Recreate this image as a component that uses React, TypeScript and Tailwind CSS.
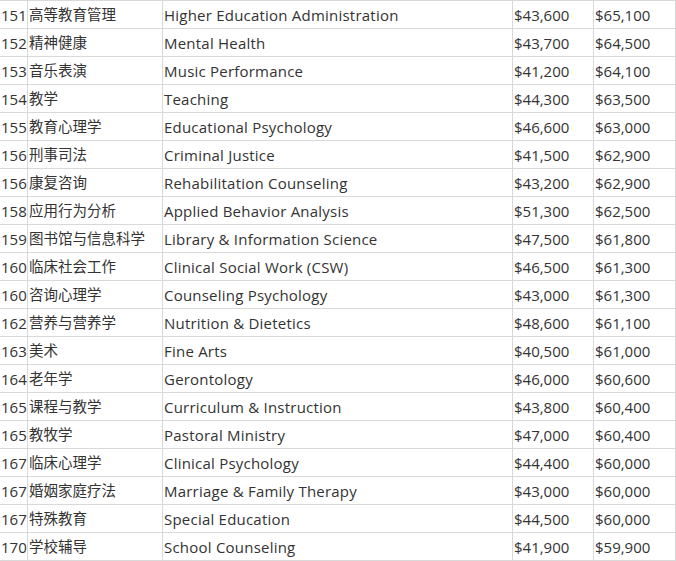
import React from "react";

const rows: [string, string, string, string, string][] = [
  ["151", "高等教育管理", "Higher Education Administration", "$43,600", "$65,100"],
  ["152", "精神健康", "Mental Health", "$43,700", "$64,500"],
  ["153", "音乐表演", "Music Performance", "$41,200", "$64,100"],
  ["154", "教学", "Teaching", "$44,300", "$63,500"],
  ["155", "教育心理学", "Educational Psychology", "$46,600", "$63,000"],
  ["156", "刑事司法", "Criminal Justice", "$41,500", "$62,900"],
  ["156", "康复咨询", "Rehabilitation Counseling", "$43,200", "$62,900"],
  ["158", "应用行为分析", "Applied Behavior Analysis", "$51,300", "$62,500"],
  ["159", "图书馆与信息科学", "Library & Information Science", "$47,500", "$61,800"],
  ["160", "临床社会工作", "Clinical Social Work (CSW)", "$46,500", "$61,300"],
  ["160", "咨询心理学", "Counseling Psychology", "$43,000", "$61,300"],
  ["162", "营养与营养学", "Nutrition & Dietetics", "$48,600", "$61,100"],
  ["163", "美术", "Fine Arts", "$40,500", "$61,000"],
  ["164", "老年学", "Gerontology", "$46,000", "$60,600"],
  ["165", "课程与教学", "Curriculum & Instruction", "$43,800", "$60,400"],
  ["165", "教牧学", "Pastoral Ministry", "$47,000", "$60,400"],
  ["167", "临床心理学", "Clinical Psychology", "$44,400", "$60,000"],
  ["167", "婚姻家庭疗法", "Marriage & Family Therapy", "$43,000", "$60,000"],
  ["167", "特殊教育", "Special Education", "$44,500", "$60,000"],
  ["170", "学校辅导", "School Counseling", "$41,900", "$59,900"],
];

const cellExtra = [
  "",
  "text-[14.5px]",
  "tracking-[0.22px]",
  "",
  "",
];

export default function App() {
  return (
    <div
      className="w-[676px] h-[561px] bg-white text-[#333] text-[15px] overflow-hidden"
      style={{ fontFamily: '"Open Sans", "Noto Sans CJK SC", sans-serif' }}
    >
      <div className="grid grid-cols-[28px_135px_350px_81px_82px] border-t border-[#d9d9d9]">
        {rows.map((r, i) => (
          <React.Fragment key={i}>
            {r.map((c, j) => (
              <div
                key={j}
                className={`h-[28px] border-r border-b border-[#d9d9d9] pl-px pt-[2px] flex items-center whitespace-nowrap overflow-hidden leading-none ${cellExtra[j]}`}
              >
                {c}
              </div>
            ))}
          </React.Fragment>
        ))}
      </div>
    </div>
  );
}
